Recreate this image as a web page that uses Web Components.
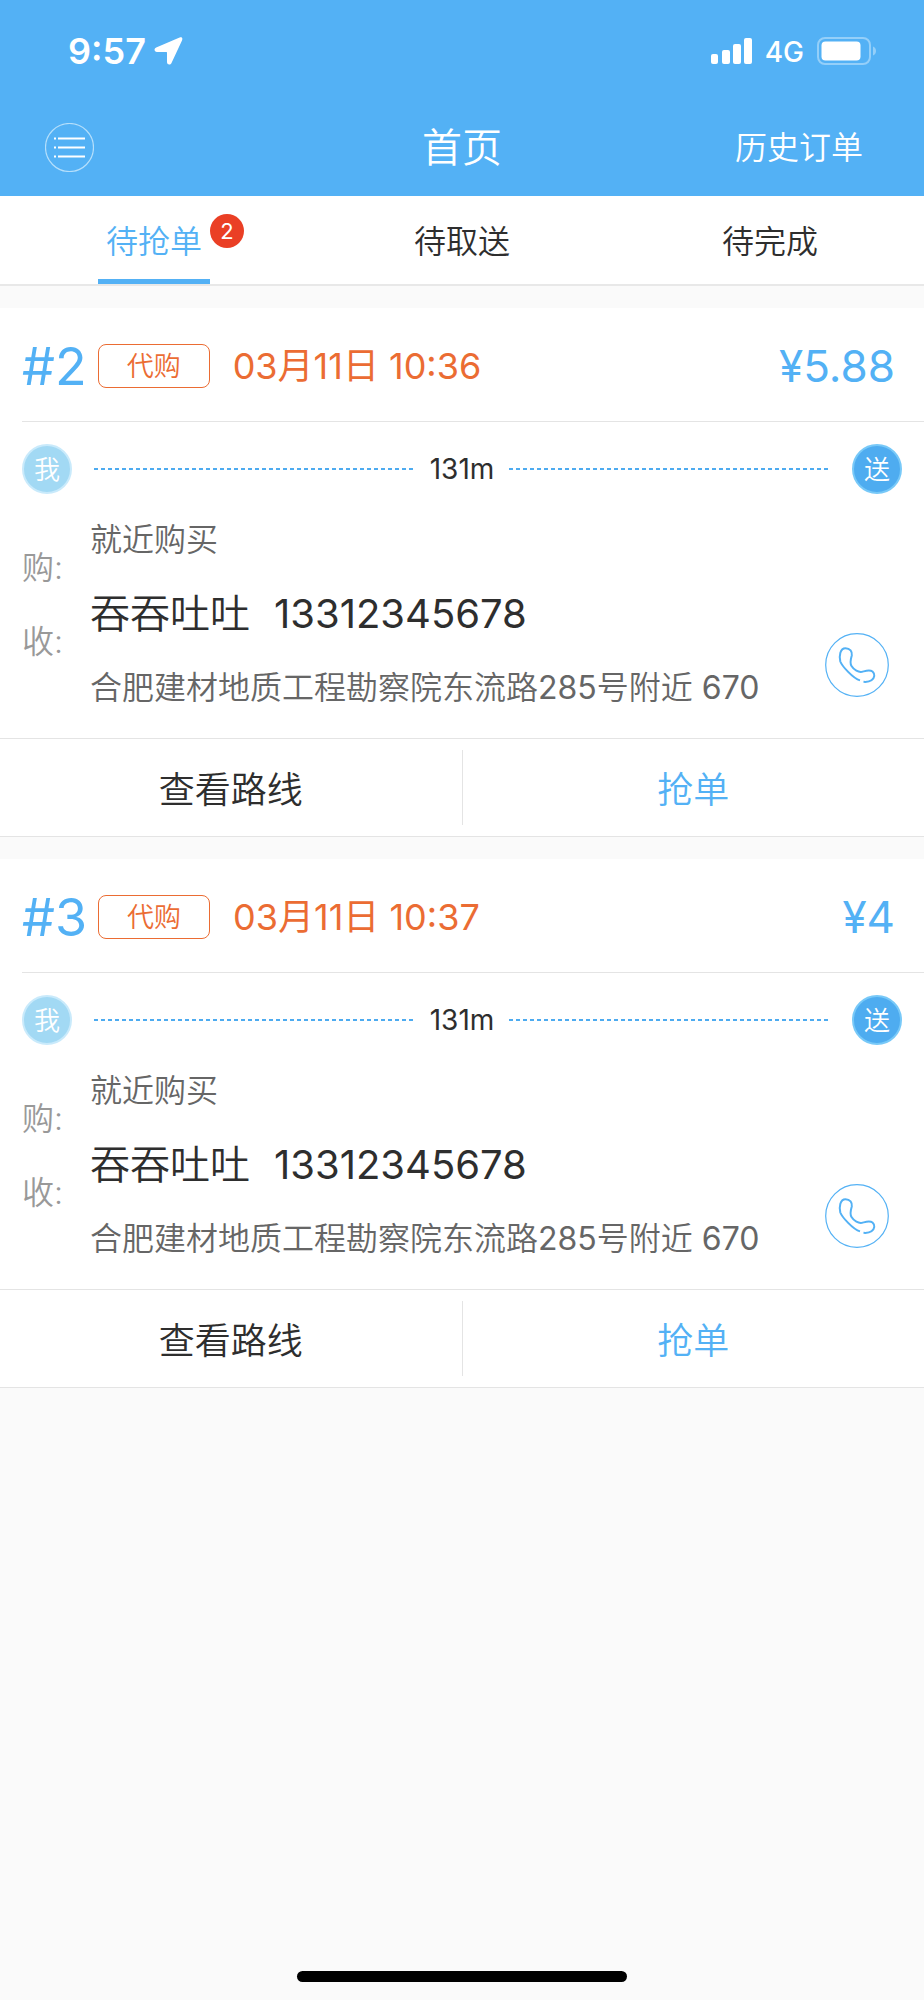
<!DOCTYPE html>
<html lang="zh-CN">
  <head>
    <meta charset="UTF-8" />
    <meta name="viewport" content="width=device-width, initial-scale=1.0" />
    <title>首页</title>
    <style>
      :root {
        --blue: #53b1f5;
        --orange: #eb6c33;
        --line: #e4e4e4;
        --ink: #2e2e2e;
      }

      body {
        margin: 0;
        background: #fafafa;
        color: var(--ink);
        font-family: Inter, "Noto Sans CJK SC", sans-serif;
        font-weight: 350;
      }

      .digits { font-weight: 400; }
    </style>
  </head>

  <body>
    <rider-app>
      <status-bar slot="top" time="9:57" network="4G"></status-bar>
      <nav-bar slot="top">
        首页
        <a slot="action" href="#history">历史订单</a>
      </nav-bar>
      <tab-bar slot="top">
        <tab-item active count="2">待抢单</tab-item>
        <tab-item>待取送</tab-item>
        <tab-item>待完成</tab-item>
      </tab-bar>

      <order-card number="#2" tag="代购" time="03月11日 10:36" price="¥5.88" distance="131m">
        <span slot="shop">就近购买</span>
        <span slot="name">吞吞吐吐</span>
        <span slot="phone">13312345678</span>
        <span slot="address">合肥建材地质工程勘察院东流路<span class="digits">285</span>号附近 <span class="digits">670</span></span>
      </order-card>
      <order-card number="#3" tag="代购" time="03月11日 10:37" price="¥4" distance="131m">
        <span slot="shop">就近购买</span>
        <span slot="name">吞吞吐吐</span>
        <span slot="phone">13312345678</span>
        <span slot="address">合肥建材地质工程勘察院东流路<span class="digits">285</span>号附近 <span class="digits">670</span></span>
      </order-card>
    </rider-app>

    <script>
      // attaches an open shadow root filled with the given markup
      class BaseElement extends HTMLElement {
        constructor () {
          super()
          this.attachShadow({ mode: 'open' })
        }

        connectedCallback () {
          this.shadowRoot.innerHTML = this.render()
        }

        attr (name) {
          return this.getAttribute(name) || ''
        }
      }

      class RiderApp extends BaseElement {
        render () {
          return `
            <style>
              :host {
                display: flex;
                flex-direction: column;
                min-height: 100vh;
              }
              main {
                flex: 1;
                display: flex;
                flex-direction: column;
                gap: 22px;
                padding-top: 22px;
              }
              .home {
                width: 330px;
                height: 11px;
                margin: 18px auto;
                border-radius: 6px;
                background: #000;
              }
            </style>
            <slot name="top"></slot>
            <main><slot></slot></main>
            <div class="home"></div>
          `
        }
      }

      class StatusBar extends BaseElement {
        render () {
          return `
            <style>
              :host {
                display: flex;
                align-items: center;
                height: 98px;
                padding: 4px 47px 0 68px;
                box-sizing: border-box;
                background: var(--blue);
                color: #fff;
              }
              .time {
                font-size: 36px;
                font-weight: 600;
                line-height: 40px;
              }
              .network {
                margin: 0 13px 0 12px;
                padding-top: 2px;
                font-size: 28px;
                line-height: 32px;
                font-weight: 500;
              }
              .arrow { margin: 0 auto 0 8px; }
              svg { fill: #fff; }
            </style>
            <span class="time">${this.attr('time')}</span>
            <svg class="arrow" width="30" height="28" viewBox="0 0 30 28">
              <path d="M26.200.300 2.200 10.400C-.5 11.600.3 15 3 15h9.400q.6 0 .6.600V25c0 2.900 3.300 3.400 4.500 1L28 3.400C29 1.200 27.800-.4 26.200.300z" />
            </svg>
            <svg width="42" height="28" viewBox="0 0 42 28">
              <rect x="0" y="17" width="7" height="10" rx="2" />
              <rect x="11" y="13" width="8" height="14" rx="2" />
              <rect x="22" y="7" width="8" height="20" rx="2" />
              <rect x="33" y="1" width="8" height="26" rx="2" />
            </svg>
            <span class="network">${this.attr('network')}</span>
            <svg width="60" height="28" viewBox="0 0 60 28">
              <rect x="1" y="1" width="52" height="26" rx="7" fill="none" stroke="#94cff9" stroke-width="2" />
              <rect x="4.500" y="4.500" width="39" height="19" rx="4" />
              <path d="M56 9.500q3 1.200 3 4.500t-3 4.500z" fill="#94cff9" />
            </svg>
          `
        }
      }

      class NavBar extends BaseElement {
        render () {
          return `
            <style>
              :host {
                display: grid;
                grid-template-columns: 1fr auto 1fr;
                align-items: center;
                height: 98px;
                padding: 0 61px 0 45px;
                background: var(--blue);
                color: #fff;
              }
              h1 {
                margin: 0 0 0 16px;
                padding-top: 2px;
                font-size: 40px;
                font-weight: 350;
                line-height: 56px;
              }
              button {
                justify-self: start;
                padding: 0;
                border: 0;
                background: none;
              }
              svg { display: block; }
              ::slotted(a) {
                justify-self: end;
                padding-top: 2px;
                color: inherit;
                font-size: 32px;
                line-height: 44px;
                text-decoration: none;
              }
            </style>
            <button aria-label="菜单">
              <svg width="49" height="49" viewBox="0 0 49 49" fill="none" stroke="#fff" stroke-width="2">
                <circle cx="24.500" cy="24.500" r="24" stroke="#b5dffb" stroke-width="1.200" />
                <path d="M9 15.500h2M13 15.500h27M9 24.500h2M13 24.500h27M9 33.500h2M13 33.500h27" />
              </svg>
            </button>
            <h1><slot></slot></h1>
            <slot name="action"></slot>
          `
        }
      }

      class TabBar extends BaseElement {
        render () {
          return `
            <style>
              :host {
                display: grid;
                grid-template-columns: repeat(3, 1fr);
                height: 88px;
                border-bottom: 2px solid #e8e8e8;
                background: #fff;
              }
            </style>
            <slot></slot>
          `
        }
      }

      class TabItem extends BaseElement {
        render () {
          const count = this.attr('count')
          return `
            <style>
              :host {
                display: flex;
                justify-content: center;
              }
              button {
                position: relative;
                width: 112px;
                padding: 9px 0 0;
                border: 0;
                border-bottom: 5px solid transparent;
                background: none;
                color: var(--ink);
                font: 350 32px/44px Inter, "Noto Sans CJK SC", sans-serif;
              }
              :host([active]) button {
                border-color: var(--blue);
                color: var(--blue);
              }
              .badge {
                position: absolute;
                left: 100%;
                top: 18px;
                width: 34px;
                border-radius: 50%;
                background: #ea3f25;
                color: #fff;
                font-size: 22px;
                font-weight: 400;
                line-height: 34px;
              }
            </style>
            <button>
              <slot></slot>
              ${count && `<span class="badge">${count}</span>`}
            </button>
          `
        }
      }

      class RouteLine extends BaseElement {
        render () {
          return `
            <style>
              :host {
                display: flex;
                align-items: center;
                gap: 15px;
                padding: 22px 22px 0;
                font-size: 28px;
                font-weight: 400;
                line-height: 32px;
              }
              i {
                flex: 1;
                height: 2px;
                background: repeating-linear-gradient(90deg, #4dabf0 0 4px, transparent 4px 7px);
              }
              .stop {
                width: 46px;
                padding-top: 2px;
                border: 2px solid #c9eafb;
                border-radius: 50%;
                background: #a2d9f4;
                color: #fff;
                font-size: 26px;
                font-weight: 350;
                line-height: 44px;
                text-align: center;
              }
              .end {
                border-color: #78c9f8;
                background: #4eacf0;
              }
              .start { margin-right: 7px; }
              .end { margin-left: 7px; }
            </style>
            <span class="stop start">我</span>
            <i></i>
            <slot></slot>
            <i></i>
            <span class="stop end">送</span>
          `
        }
      }

      class OrderCard extends BaseElement {
        render () {
          return `
            <style>
              :host {
                display: block;
                border-bottom: 1px solid var(--line);
                background: #fff;
              }
              header {
                display: flex;
                align-items: center;
                height: 114px;
                margin-left: 22px;
                padding: 3px 29px 0 0;
                box-sizing: border-box;
                border-bottom: 1px solid var(--line);
              }
              .number {
                padding-top: 2px;
                color: var(--blue);
                font-size: 52px;
                font-weight: 400;
                line-height: 60px;
              }
              .tag {
                width: 110px;
                margin: 0 23px 0 11px;
                padding-top: 2px;
                border: 1px solid var(--orange);
                border-radius: 8px;
                color: var(--orange);
                font-size: 27px;
                line-height: 40px;
                text-align: center;
              }
              time {
                color: var(--orange);
                font-size: 36px;
                font-weight: 400;
                line-height: 48px;
              }
              .price {
                margin-left: auto;
                color: var(--blue);
                font-size: 44px;
                font-weight: 400;
                line-height: 52px;
              }
              .body {
                display: flex;
                padding: 9px 35px 13px 22px;
                font-size: 32px;
                line-height: 74px;
              }
              .labels {
                width: 68px;
                padding-top: 28px;
                color: #999;
              }
              .details {
                flex: 1;
                color: #666;
              }
              .person {
                display: flex;
                gap: 24px;
                color: var(--ink);
                font-size: 40px;
              }
              .person slot[name="phone"] { font-weight: 400; }
              .call {
                align-self: flex-end;
                margin-bottom: 28px;
                padding: 0;
                border: 0;
                background: none;
              }
              .call svg { display: block; }
              footer {
                display: grid;
                grid-template-columns: 1fr 1px 1fr;
                align-items: center;
                height: 97px;
                border-top: 1px solid var(--line);
              }
              footer i {
                height: 75px;
                background: var(--line);
              }
              footer button {
                height: 97px;
                padding: 4px 0 0;
                border: 0;
                background: none;
                color: var(--ink);
                font: 350 36px/48px Inter, "Noto Sans CJK SC", sans-serif;
              }
              footer .grab { color: var(--blue); }
            </style>
            <header>
              <span class="number">${this.attr('number')}</span>
              <span class="tag">${this.attr('tag')}</span>
              <time>${this.attr('time')}</time>
              <span class="price">${this.attr('price')}</span>
            </header>
            <route-line>${this.attr('distance')}</route-line>
            <div class="body">
              <div class="labels">
                <div>购:</div>
                <div>收:</div>
              </div>
              <div class="details">
                <div><slot name="shop"></slot></div>
                <div class="person"><slot name="name"></slot><slot name="phone"></slot></div>
                <div><slot name="address"></slot></div>
              </div>
              <button class="call" aria-label="拨打电话">
                <svg width="64" height="64" viewBox="0 0 64 64" fill="none" stroke="#53b1f5">
                  <circle cx="32" cy="32" r="31.300" stroke-width="1.200" />
                  <path stroke-width="2" d="M35 47.400C28 45.500 17 33 15.300 28.500 14 23 15 15.200 20.500 15.200 25 15.200 27.500 18.500 26.800 22.500 25.500 27 24.500 30 26.500 33 29 37 33.500 39.500 37 38.800 40.500 38 44.500 36.400 47.500 38.500 50.300 41 49.800 45 46.500 47.300 44.500 48.800 41 49 38.500 48.800" />
                </svg>
              </button>
            </div>
            <footer>
              <button>查看路线</button>
              <i></i>
              <button class="grab">抢单</button>
            </footer>
          `
        }
      }

      customElements.define('rider-app', RiderApp)
      customElements.define('status-bar', StatusBar)
      customElements.define('nav-bar', NavBar)
      customElements.define('tab-bar', TabBar)
      customElements.define('tab-item', TabItem)
      customElements.define('route-line', RouteLine)
      customElements.define('order-card', OrderCard)
    </script>
  </body>
</html>
